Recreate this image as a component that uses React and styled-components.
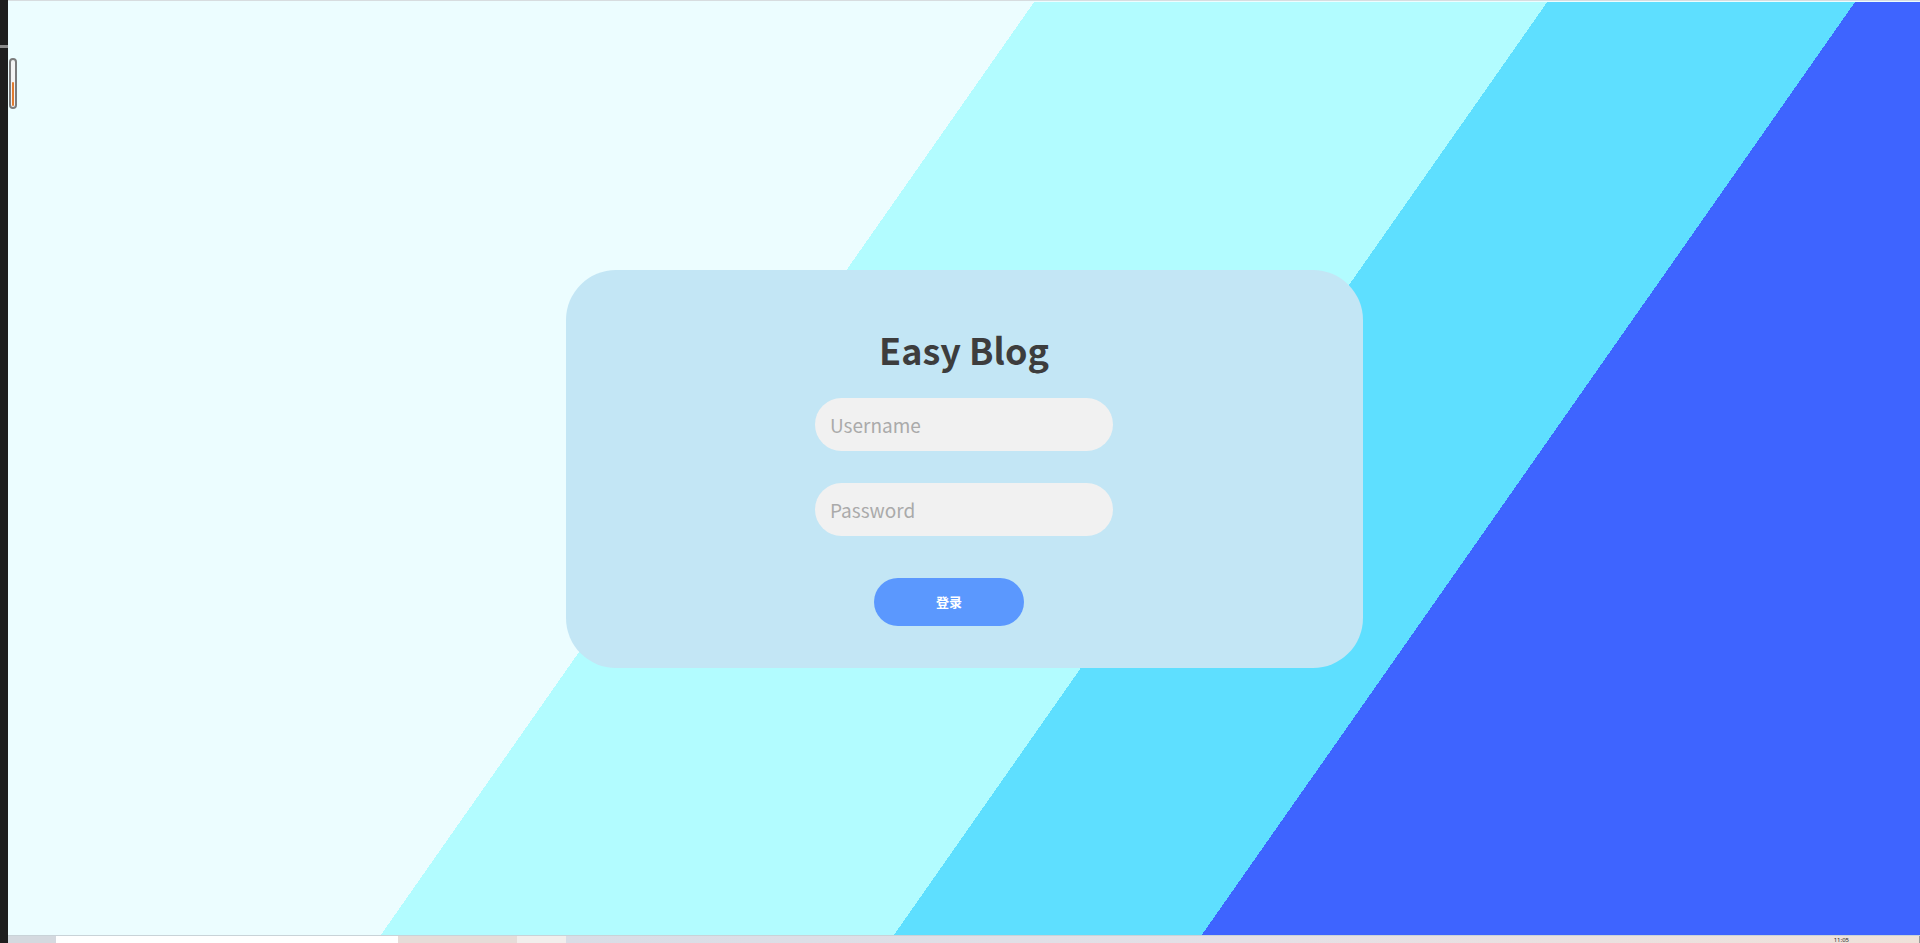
import React from "react";
import styled, { createGlobalStyle } from "styled-components";

const GlobalStyle = createGlobalStyle`
  html, body {
    margin: 0;
    padding: 0;
    height: 100%;
    overflow: hidden;
  }
  #root {
    height: 100%;
  }
  * {
    box-sizing: border-box;
  }
`;

const App = () => {
  return (
    <>
      <GlobalStyle />
      <Shell>
        <SideStrip>
          <SideMark />
        </SideStrip>
        <Viewport>
          <TopLine />
          <Stage>
            <LoginCard>
              <Title>Easy Blog</Title>
              <Field type="text" placeholder="Username" />
              <Field type="password" placeholder="Password" />
              <LoginButton type="button">登录</LoginButton>
            </LoginCard>
          </Stage>
          <Taskbar>
            <TaskSlot width="48px" background="#d4d9df" />
            <TaskSlot width="342px" background="#ffffff" />
            <TaskSlot width="119px" background="#e6dcd8" />
            <TaskSlot width="49px" background="#f2eeec" />
            <TaskTray>
              <Clock>11:05</Clock>
            </TaskTray>
          </Taskbar>
        </Viewport>
        <Gauge>
          <GaugeFill />
        </Gauge>
      </Shell>
    </>
  );
};

const Shell = styled.div`
  position: relative;
  display: flex;
  height: 100vh;
  width: 100vw;
`;

const SideStrip = styled.div`
  width: 8px;
  flex-shrink: 0;
  background: #1e1e1e;
  padding-top: 45px;
`;

const SideMark = styled.div`
  height: 3px;
  background: #8a8a8a;
`;

const Viewport = styled.div`
  flex: 1;
  display: flex;
  flex-direction: column;
  min-width: 0;
`;

const TopLine = styled.div`
  height: 2px;
  flex-shrink: 0;
  background: #ecfdff;
  border-top: 1px solid #d7dcdf;
`;

const Stage = styled.div`
  flex: 1;
  display: flex;
  align-items: center;
  justify-content: center;
  background: linear-gradient(
    125deg,
    #ecfdff 0%,
    #ecfdff 40%,
    #b2fcff 40%,
    #b2fcff 60%,
    #5edfff 60%,
    #5edfff 72%,
    #3e64ff 72%,
    #3e64ff 100%
  );
`;

const LoginCard = styled.div`
  width: 797px;
  height: 398px;
  border-radius: 50px;
  background: #c3e6f5;
  display: flex;
  flex-direction: column;
  align-items: center;
  padding-top: 54px;
`;

const Title = styled.h1`
  margin: 0 0 24px;
  font-family: "Noto Sans CJK SC", "Noto Sans", sans-serif;
  font-size: 36px;
  line-height: 50px;
  font-weight: 700;
  color: #3d3d3d;
`;

const Field = styled.input`
  width: 298px;
  height: 53px;
  border: none;
  outline: none;
  border-radius: 27px;
  background: #f1f1f1;
  padding: 0 15px;
  margin-bottom: 32px;
  font-family: "Noto Sans CJK SC", "Noto Sans", sans-serif;
  font-size: 19px;
  color: #333;

  &::placeholder {
    color: #aaaaaa;
  }
`;

const LoginButton = styled.button`
  width: 150px;
  height: 48px;
  margin: 10px 30px 0 0;
  border: none;
  outline: none;
  border-radius: 24px;
  background: #5b98fe;
  color: #ffffff;
  font-family: "Noto Sans CJK SC", sans-serif;
  font-size: 13px;
  font-weight: 700;
  cursor: pointer;
`;

const Taskbar = styled.div`
  height: 8px;
  flex-shrink: 0;
  display: flex;
  overflow: hidden;
  border-top: 1px solid #c9d3d8;
`;

const TaskSlot = styled.div`
  width: ${(props) => props.width};
  flex-shrink: 0;
  background: ${(props) => props.background};
`;

const TaskTray = styled.div`
  flex: 1;
  display: flex;
  justify-content: flex-end;
  align-items: center;
  padding-right: 70px;
  background: linear-gradient(90deg, #d9dde6 0%, #e4e0e6 50%, #efe2da 100%);
  border-right: 1px solid #9a9a9a;
`;

const Clock = styled.span`
  font-family: "Noto Sans", sans-serif;
  font-size: 6px;
  line-height: 6px;
  color: #222;
`;

const Gauge = styled.div`
  position: absolute;
  left: 9px;
  top: 58px;
  width: 8px;
  height: 51px;
  border: 2px solid #7c7c7c;
  border-radius: 4px;
  background: #f4f4f4;
  display: flex;
  align-items: flex-end;
  padding: 1px;
`;

const GaugeFill = styled.div`
  width: 100%;
  height: 54%;
  background: #e07a2e;
  border-radius: 1px;
`;

export default App;
